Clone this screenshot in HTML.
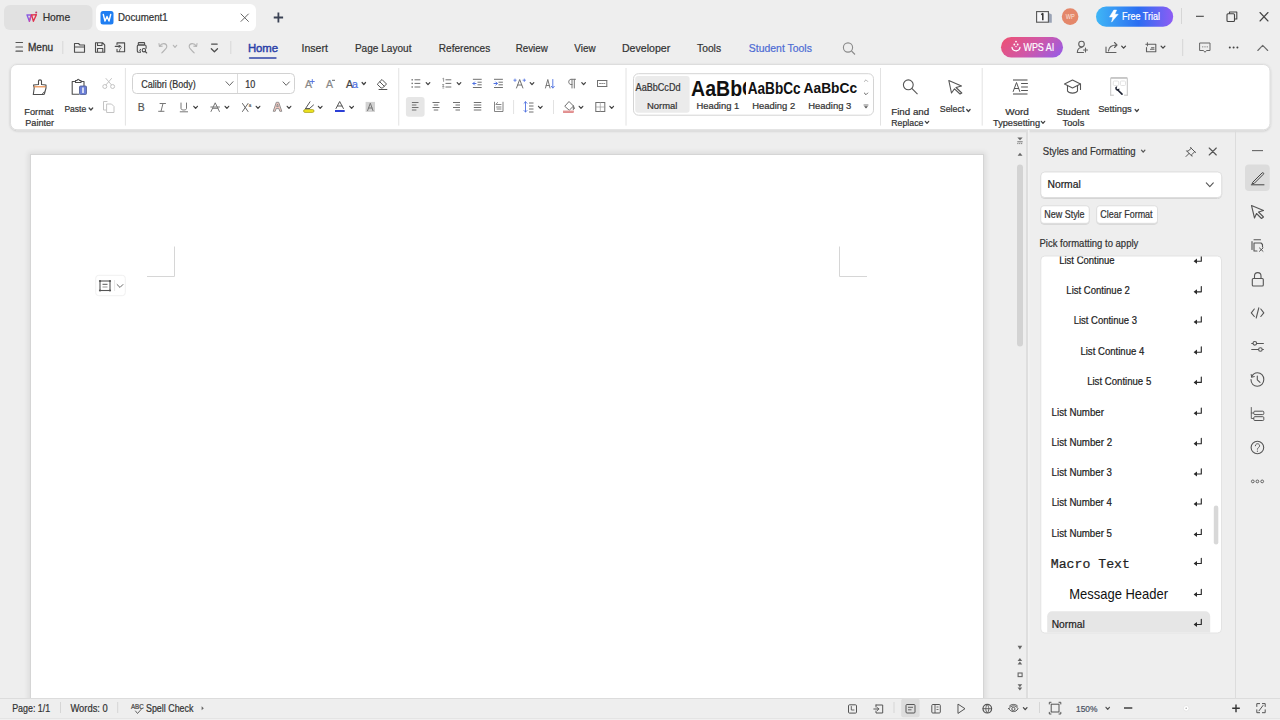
<!DOCTYPE html>
<html><head><meta charset="utf-8">
<style>
*{margin:0;padding:0}
html,body{width:1280px;height:720px;overflow:hidden;background:#eeeeee}
svg{position:absolute;left:0;top:0}
</style></head><body>
<svg width="1280" height="720" viewBox="0 0 1280 720">
<rect x="0" y="0" width="1280" height="720" rx="0" fill="#eeeeee" />
<rect x="4" y="5" width="88.5" height="25" rx="6" fill="#e1e1e1" />
<rect x="96" y="4" width="160" height="27" rx="6" fill="#ffffff" />
<defs><linearGradient id="wl" x1="0" y1="0" x2="1" y2="1"><stop offset="0" stop-color="#8b5cf6"/><stop offset="1" stop-color="#f43f5e"/></linearGradient><linearGradient id="ft" x1="0" y1="0" x2="1" y2="0"><stop offset="0" stop-color="#3fb6f6"/><stop offset="0.55" stop-color="#2b6ef2"/><stop offset="1" stop-color="#8e5cf4"/></linearGradient><linearGradient id="ai" x1="0" y1="0" x2="1" y2="1" gradientUnits="objectBoundingBox" gradientTransform="rotate(-25 .5 .5)"><stop offset="0" stop-color="#f2506a"/><stop offset="0.5" stop-color="#d058a8"/><stop offset="1" stop-color="#8c5cf2"/></linearGradient></defs>
<path d="M27,15 L31.2,15 L29.4,21.3 Z" stroke="#8a5ce0" stroke-width="1.35" fill="none" stroke-linecap="round" stroke-linejoin="round" />
<path d="M29.4,21.3 L31.2,15" stroke="#c44ab0" stroke-width="1.35" fill="none" stroke-linecap="round" stroke-linejoin="round" />
<path d="M31.6,15 L36.4,14.6 L33.4,21.3 Z" stroke="#e0344e" stroke-width="1.35" fill="none" stroke-linecap="round" stroke-linejoin="round" />
<circle cx="36.2" cy="12.6" r="1" fill="#c03a6a"/>
<text x="42.67" y="21.25" font-family="Liberation Sans" font-size="10.03" stroke="#333" stroke-width="0.22" fill="#333" textLength="27.57" lengthAdjust="spacingAndGlyphs" >Home</text>
<rect x="100.5" y="11" width="13" height="13.5" rx="2.5" fill="#1f7ef2" />
<path d="M103.3,14.5 L105,21 L107,16.5 L109,21 L110.7,14.5" stroke="#fff" stroke-width="1.4" fill="none" stroke-linecap="round" stroke-linejoin="round" />
<text x="117.97" y="21.25" font-family="Liberation Sans" font-size="10.03" stroke="#333" stroke-width="0.22" fill="#333" textLength="49.70" lengthAdjust="spacingAndGlyphs" >Document1</text>
<path d="M241,14 L248.4,21.4 M248.4,14 L241,21.4" stroke="#666" stroke-width="1" fill="none" stroke-linecap="round" stroke-linejoin="round" />
<path d="M278.4,12.4 L278.4,22.6 M273.75,17.5 L283.1,17.5" stroke="#3a4254" stroke-width="1.8" fill="none" stroke-linejoin="round" stroke-linecap="butt"/>
<path d="M1048.9,13 L1051.8,14.5 L1051.8,22.7 L1048.9,22.7 Z" fill="#9aa3b5"/>
<rect x="1036.6" y="11.6" width="11.8" height="10.6" rx="0" fill="#f8f8fa" stroke="#555" stroke-width="1.1" />
<path d="M1041.2,14.6 L1042.8,13.6 L1042.8,20.2" stroke="#333" stroke-width="1.5" fill="none" stroke-linejoin="round" stroke-linecap="butt"/>
<circle cx="1070.1" cy="16.6" r="8.3" fill="#e4876a"/>
<text x="1065.77" y="19.40" font-family="Liberation Sans" font-size="6.69" fill="#fbe6de" textLength="9.01" lengthAdjust="spacingAndGlyphs" stroke-width="0">WP</text>
<rect x="1096" y="6.6" width="77.2" height="20.2" rx="10.1" fill="url(#ft)" />
<path d="M1113.8,10.1 L1109.5,17 L1112.8,17 L1111.6,22.1 L1118.2,14.3 L1114.8,14.3 L1116.6,10.1 Z" fill="#ffffff" stroke="#ffffff" stroke-width="0.5" stroke-linejoin="round"/>
<text x="1121.98" y="20.20" font-family="Liberation Sans" font-size="11.05" stroke="#ffffff" stroke-width="0.22" fill="#ffffff" textLength="38.04" lengthAdjust="spacingAndGlyphs" >Free Trial</text>
<line x1="1181.5" y1="8" x2="1181.5" y2="24" stroke="#d6d6d6" stroke-width="1" />
<line x1="1196" y1="16.3" x2="1203.8" y2="16.3" stroke="#444" stroke-width="1.1" />
<rect x="1227" y="13.8" width="7.5" height="7.7" rx="1" fill="none" stroke="#444" stroke-width="1.1" />
<path d="M1229.5,13.5 L1229.5,12 L1236.8,12 L1236.8,19 L1234.8,19" stroke="#444" stroke-width="1.1" fill="none" stroke-linecap="round" stroke-linejoin="round" />
<path d="M1260,12.5 L1268,21 M1268,12.5 L1260,21" stroke="#444" stroke-width="1.1" fill="none" stroke-linecap="round" stroke-linejoin="round" />
<path d="M16,42.5 L22.5,42.5 M16,47 L22.5,47 M16,51.2 L22.5,51.2" stroke="#555" stroke-width="1.2" fill="none" stroke-linecap="round" stroke-linejoin="round" />
<text x="27.99" y="50.80" font-family="Liberation Sans" font-size="10.03" fill="#333" textLength="25.17" lengthAdjust="spacingAndGlyphs" stroke="#333" stroke-width="0.3">Menu</text>
<line x1="62.8" y1="41" x2="62.8" y2="54" stroke="#d8d8d8" stroke-width="1" />
<path d="M74.5,43.5 L78.5,43.5 L80,45 L84.5,45 L84.5,52.3 L74.5,52.3 Z M74.5,47 L84.5,47" stroke="#4d4d4d" stroke-width="1.1" fill="none" stroke-linecap="round" stroke-linejoin="round" />
<path d="M95.5,42.7 L102.5,42.7 L104.7,45 L104.7,52.3 L95.5,52.3 Z M97.5,42.7 L97.5,45.5 L102,45.5 L102,42.7 M97.5,52.3 L97.5,48.5 L102.8,48.5 L102.8,52.3" stroke="#4d4d4d" stroke-width="1.1" fill="none" stroke-linecap="round" stroke-linejoin="round" />
<path d="M117,44.6 L117,42.9 L124.6,42.9 L124.6,51.8 L117,51.8 L117,49.2" stroke="#4d4d4d" stroke-width="1.1" fill="none" stroke-linecap="round" stroke-linejoin="round" />
<path d="M115.3,46.3 L118.6,46.3" stroke="#4d4d4d" stroke-width="1.3" fill="none" stroke-linecap="round" stroke-linejoin="round" />
<path d="M118.6,44.6 L121.6,46.3 L118.6,48 Z" fill="#4d4d4d"/>
<path d="M121.3,47.6 C119.8,48.8 119.3,50.2 119.6,51.6" stroke="#4d4d4d" stroke-width="1" fill="none" stroke-linecap="round" stroke-linejoin="round" />
<rect x="138.3" y="42.6" width="6.3" height="2.4" rx="0.6" fill="none" stroke="#4d4d4d" stroke-width="1.1" />
<path d="M140.5,52.2 L138.6,52.2 C137.8,52.2 137.3,51.7 137.3,50.9 L137.3,46.3 C137.3,45.5 137.8,45 138.6,45 L144.8,45 C145.6,45 146.1,45.5 146.1,46.3 L146.1,48.3" stroke="#4d4d4d" stroke-width="1.1" fill="none" stroke-linecap="round" stroke-linejoin="round" />
<path d="M140.6,49.3 C139.3,49.3 139.3,51.4 140.6,51.4" stroke="#4d4d4d" stroke-width="1" fill="none" stroke-linecap="round" stroke-linejoin="round" />
<circle cx="143.9" cy="50.2" r="1.7" fill="none" stroke="#4d4d4d" stroke-width="1.1"/>
<path d="M145.2,51.5 L146.7,52.9" stroke="#4d4d4d" stroke-width="1.2" fill="none" stroke-linecap="round" stroke-linejoin="round" />
<path d="M159.6,46.2 C161.5,42.8 166.8,42.6 166.8,46.6 C166.8,48.6 164,50.6 161.8,52.9 M159,43.6 L159.4,46.5 L162.2,46.1" stroke="#b4b4b4" stroke-width="1.1" fill="none" stroke-linecap="round" stroke-linejoin="round" />
<path d="M173.34,45.30 L175.00,47.30 L176.66,45.30" fill="none" stroke="#b9b9b9" stroke-width="1.25" stroke-linecap="round" stroke-linejoin="round"/>
<path d="M196.4,46.2 C194.5,42.8 189.2,42.6 189.2,46.6 C189.2,48.6 192,50.6 194.2,52.9 M197,43.6 L196.6,46.5 L193.8,46.1" stroke="#b4b4b4" stroke-width="1.1" fill="none" stroke-linecap="round" stroke-linejoin="round" />
<path d="M211.6,44 L217.2,44 M211.3,48.7 L214.4,51.8 L217.5,48.7" stroke="#4d4d4d" stroke-width="1.25" fill="none" stroke-linecap="round" stroke-linejoin="round" />
<line x1="230.8" y1="41" x2="230.8" y2="54" stroke="#d8d8d8" stroke-width="1" />
<text x="247.89" y="52.00" font-family="Liberation Sans" font-size="11.63" fill="#2b40a8" textLength="30.25" lengthAdjust="spacingAndGlyphs" stroke="#2b40a8" stroke-width="0.45">Home</text>
<rect x="248.8" y="57.2" width="27.9" height="1.6" rx="0.8" fill="#2f44a8" />
<text x="301.55" y="52.00" font-family="Liberation Sans" font-size="11.34" stroke="#333" stroke-width="0.22" fill="#333" textLength="26.31" lengthAdjust="spacingAndGlyphs" >Insert</text>
<text x="354.89" y="52.00" font-family="Liberation Sans" font-size="11.34" stroke="#333" stroke-width="0.22" fill="#333" textLength="56.56" lengthAdjust="spacingAndGlyphs" >Page Layout</text>
<text x="438.80" y="52.00" font-family="Liberation Sans" font-size="11.34" stroke="#333" stroke-width="0.22" fill="#333" textLength="51.45" lengthAdjust="spacingAndGlyphs" >References</text>
<text x="515.72" y="52.00" font-family="Liberation Sans" font-size="11.34" stroke="#333" stroke-width="0.22" fill="#333" textLength="32.07" lengthAdjust="spacingAndGlyphs" >Review</text>
<text x="574.35" y="52.00" font-family="Liberation Sans" font-size="11.34" stroke="#333" stroke-width="0.22" fill="#333" textLength="21.24" lengthAdjust="spacingAndGlyphs" >View</text>
<text x="621.95" y="52.00" font-family="Liberation Sans" font-size="11.34" stroke="#333" stroke-width="0.22" fill="#333" textLength="48.34" lengthAdjust="spacingAndGlyphs" >Developer</text>
<text x="697.09" y="52.00" font-family="Liberation Sans" font-size="11.34" stroke="#333" stroke-width="0.22" fill="#333" textLength="23.96" lengthAdjust="spacingAndGlyphs" >Tools</text>
<text x="748.83" y="52.00" font-family="Liberation Sans" font-size="11.34" stroke="#4d6bd4" stroke-width="0.22" fill="#4d6bd4" textLength="63.05" lengthAdjust="spacingAndGlyphs" >Student Tools</text>
<circle cx="848" cy="47.5" r="4.6" fill="none" stroke="#8a8a8a" stroke-width="1.1"/>
<line x1="851.5" y1="51" x2="855" y2="54.5" stroke="#8a8a8a" stroke-width="1.1" />
<rect x="1001" y="37" width="62" height="20.5" rx="10.25" fill="url(#ai)" />
<path d="M1012,47.3 C1012.5,52 1019.5,52 1020,47.3" stroke="#fff" stroke-width="1.3" fill="none" stroke-linecap="round" stroke-linejoin="round" />
<circle cx="1014.3" cy="44.5" r="0.9" fill="#fff"/><circle cx="1017.7" cy="44.5" r="0.9" fill="#fff"/><circle cx="1016" cy="41.6" r="0.9" fill="#fff"/><circle cx="1016" cy="46.5" r="0.7" fill="#fff"/>
<text x="1023.46" y="51.30" font-family="Liberation Sans" font-size="11.63" stroke="#ffffff" stroke-width="0.22" fill="#ffffff" textLength="30.85" lengthAdjust="spacingAndGlyphs" >WPS AI</text>
<circle cx="1081.5" cy="44" r="2.8" fill="none" stroke="#606060" stroke-width="1.1"/>
<path d="M1077.3,52.5 C1077.5,48.5 1080,47.5 1082,47.5 M1077.3,52.5 L1083.5,52.5 M1085.5,48 L1085.5,52 M1083.5,50 L1087.5,50" stroke="#606060" stroke-width="1.1" fill="none" stroke-linecap="round" stroke-linejoin="round" />
<path d="M1106,47 L1106,52.5 L1116,52.5 M1108.5,51 C1109,46.5 1112,45 1116.5,45 M1114.5,42.5 L1117,45 L1114.5,47.5" stroke="#606060" stroke-width="1.1" fill="none" stroke-linecap="round" stroke-linejoin="round" />
<path d="M1121.6999999999998,46.1 L1123.6,48.1 L1125.5,46.1" stroke="#444" stroke-width="1.3" fill="none" stroke-linecap="round" stroke-linejoin="round" />
<path d="M1149.5,44.3 L1155.8,44.3 L1155.8,51.8 L1146.5,51.8 L1146.5,47.5 M1150.5,49.3 L1154,49.3 M1151.5,47.8 L1154,47.8" stroke="#606060" stroke-width="1.1" fill="none" stroke-linecap="round" stroke-linejoin="round" />
<path d="M1145.8,44.3 L1149,44.3 M1147.4,42.7 L1147.4,45.9" stroke="#606060" stroke-width="1" fill="none" stroke-linecap="round" stroke-linejoin="round" />
<path d="M1161.1,46.1 L1163,48.1 L1164.9,46.1" stroke="#444" stroke-width="1.3" fill="none" stroke-linecap="round" stroke-linejoin="round" />
<line x1="1182.7" y1="39" x2="1182.7" y2="56" stroke="#d6d6d6" stroke-width="1" />
<path d="M1200,43 L1210,43 L1210,50.5 L1206.5,50.5 L1205,52.3 L1203.5,50.5 L1200,50.5 Z" stroke="#666" stroke-width="1" fill="none" stroke-linecap="round" stroke-linejoin="round" />
<circle cx="1202.8" cy="46.8" r="0.6" fill="#666"/>
<circle cx="1205" cy="46.8" r="0.6" fill="#666"/>
<circle cx="1207.2" cy="46.8" r="0.6" fill="#666"/>
<circle cx="1229.8" cy="47.5" r="1" fill="#444"/>
<circle cx="1233.6" cy="47.5" r="1" fill="#444"/>
<circle cx="1237.4" cy="47.5" r="1" fill="#444"/>
<path d="M1257.8,50.5 L1262.7,45.3 L1267.7,50.5" stroke="#6a6a6a" stroke-width="1.1" fill="none" stroke-linecap="round" stroke-linejoin="round" />
<defs><filter id="sh" x="-2%" y="-10%" width="104%" height="130%"><feDropShadow dx="0" dy="0.8" stdDeviation="0.9" flood-color="#000" flood-opacity="0.18"/></filter></defs>
<rect x="10.5" y="64.5" width="1259.5" height="65.3" rx="6.5" fill="#ffffff" stroke="#dddddd" stroke-width="1" filter="url(#sh)"/>
<path d="M38.5,81 C38.5,79.5 41.5,79.5 41.5,81 L41.5,84.5 L46,85 L46,88 L44.5,93.5 C44.5,94.5 43.5,94.5 43,94.5 L33.3,94.5 L34.2,88 L33.5,85 L38.5,84.5 Z" stroke="#4d4d4d" stroke-width="1.1" fill="none" stroke-linecap="round" stroke-linejoin="round" />
<line x1="33.8" y1="86.8" x2="45.8" y2="86.8" stroke="#e8823a" stroke-width="1.1" />
<path d="M42,94.5 C43,93.5 43,92 44.5,92" stroke="#4d4d4d" stroke-width="1" fill="none" stroke-linecap="round" stroke-linejoin="round" />
<text x="24.36" y="114.70" font-family="Liberation Sans" font-size="9.45" stroke="#333" stroke-width="0.22" fill="#333" textLength="29.10" lengthAdjust="spacingAndGlyphs" >Format</text>
<text x="25.27" y="125.70" font-family="Liberation Sans" font-size="9.45" stroke="#333" stroke-width="0.22" fill="#333" textLength="28.80" lengthAdjust="spacingAndGlyphs" >Painter</text>
<path d="M74.5,81.5 L72.2,81.5 L72.2,94.3 L79,94.3 M81.5,81.5 L84,81.5 L84,86 M75.5,82.5 L75.5,80.5 L77,80.5 C77.5,78.8 79,78.8 79.5,80.5 L81,80.5 L81,82.5 Z" stroke="#4d4d4d" stroke-width="1.1" fill="none" stroke-linecap="round" stroke-linejoin="round" />
<rect x="79.5" y="86" width="7" height="8.5" rx="1" fill="#6b7fd7" stroke="#4d5a8f" stroke-width="0.8" />
<rect x="82.3" y="87.5" width="1.4" height="5.5" rx="0" fill="#ffffff" />
<text x="64.42" y="111.90" font-family="Liberation Sans" font-size="9.30" stroke="#333" stroke-width="0.22" fill="#333" textLength="21.78" lengthAdjust="spacingAndGlyphs" >Paste</text>
<path d="M89.09,108.00 L90.90,110.00 L92.71,108.00" fill="none" stroke="#444" stroke-width="1.25" stroke-linecap="round" stroke-linejoin="round"/>
<circle cx="104.8" cy="86.5" r="2" fill="none" stroke="#c4c4c4" stroke-width="1"/><circle cx="112.6" cy="86.5" r="2" fill="none" stroke="#c4c4c4" stroke-width="1"/>
<path d="M106,84.8 L111.5,78.5 M111.4,84.8 L106,78.5" stroke="#c4c4c4" stroke-width="1" fill="none" stroke-linecap="round" stroke-linejoin="round" />
<path d="M107,101.5 L103.5,101.5 L103.5,110 L106.5,110 M107,104 L111.5,104 L114,106.5 L114,112.5 L107,112.5 Z" stroke="#c4c4c4" stroke-width="1" fill="none" stroke-linecap="round" stroke-linejoin="round" />
<line x1="125.4" y1="68" x2="125.4" y2="125.6" stroke="#e2e2e2" stroke-width="1" />
<rect x="132.5" y="73.5" width="162" height="20" rx="4" fill="#ffffff" stroke="#d2d2d2" stroke-width="1" />
<line x1="237.5" y1="74" x2="237.5" y2="93" stroke="#dcdcdc" stroke-width="1" />
<text x="141.25" y="87.80" font-family="Liberation Sans" font-size="10.17" stroke="#333" stroke-width="0.22" fill="#333" textLength="54.41" lengthAdjust="spacingAndGlyphs" >Calibri (Body)</text>
<path d="M226.0,81.69999999999999 L229.5,85.5 L233.0,81.69999999999999" stroke="#666" stroke-width="1" fill="none" stroke-linecap="round" stroke-linejoin="round" />
<text x="245.32" y="87.50" font-family="Liberation Sans" font-size="10.03" stroke="#333" stroke-width="0.22" fill="#333" textLength="10.01" lengthAdjust="spacingAndGlyphs" >10</text>
<path d="M283.0,81.89999999999999 L286.2,85.3 L289.4,81.89999999999999" stroke="#666" stroke-width="1" fill="none" stroke-linecap="round" stroke-linejoin="round" />
<text x="305.00" y="87.50" font-family="Liberation Sans" font-size="11.05" stroke="#888888" stroke-width="0.22" fill="#888888" textLength="7.02" lengthAdjust="spacingAndGlyphs" >A</text>
<path d="M312.3,79.5 L312.3,83.5 M310.3,81.5 L314.3,81.5" stroke="#4d6fe0" stroke-width="0.9" fill="none" stroke-linecap="round" stroke-linejoin="round" />
<text x="326.00" y="87.50" font-family="Liberation Sans" font-size="11.05" stroke="#888888" stroke-width="0.22" fill="#888888" textLength="7.02" lengthAdjust="spacingAndGlyphs" >A</text>
<line x1="332" y1="80.3" x2="335" y2="80.3" stroke="#555" stroke-width="0.9" />
<text x="346.00" y="87.50" font-family="Liberation Sans" font-size="11.05" stroke="#444" stroke-width="0.22" fill="#444" textLength="7.02" lengthAdjust="spacingAndGlyphs" >A</text>
<text x="352.07" y="87.50" font-family="Liberation Sans" font-size="10.42" stroke="#4d6fe0" stroke-width="0.22" fill="#4d6fe0" textLength="5.94" lengthAdjust="spacingAndGlyphs" >a</text>
<path d="M362.09,82.50 L363.80,84.50 L365.51,82.50" fill="none" stroke="#444" stroke-width="1.25" stroke-linecap="round" stroke-linejoin="round"/>
<path d="M377.5,84 L382,79.5 L386.5,84 L382.5,88 L381.5,88 Z M379.8,81.8 L384.2,86.2 M379,89.5 L386.9,89.5" stroke="#555" stroke-width="1" fill="none" stroke-linecap="round" stroke-linejoin="round" />
<text x="137.76" y="111.20" font-family="Liberation Sans" font-size="11.48" stroke="#555" stroke-width="0.22" fill="#555" textLength="6.98" lengthAdjust="spacingAndGlyphs" >B</text>
<path d="M160,103.5 L165.5,103.5 M158.6,111.3 L164,111.3 M163,103.5 L161,111.3" stroke="#777" stroke-width="1" fill="none" stroke-linecap="round" stroke-linejoin="round" />
<path d="M181,103 L181,108.5 C181,110.5 186.5,110.5 186.5,108.5 L186.5,103 M180.2,111.8 L187.6,111.8" stroke="#777" stroke-width="1" fill="none" stroke-linecap="round" stroke-linejoin="round" />
<path d="M193.79,106.30 L195.60,108.30 L197.41,106.30" fill="none" stroke="#444" stroke-width="1.25" stroke-linecap="round" stroke-linejoin="round"/>
<path d="M211,111.5 L215.2,102.8 L219.4,111.5 M212.5,108.3 L218,108.3 M210.8,107 L219.5,107" stroke="#777" stroke-width="1" fill="none" stroke-linecap="round" stroke-linejoin="round" />
<path d="M225.09,106.30 L226.90,108.30 L228.71,106.30" fill="none" stroke="#444" stroke-width="1.25" stroke-linecap="round" stroke-linejoin="round"/>
<path d="M242.5,103.5 L248,111.5 M248,103.5 L242.5,111.5" stroke="#666" stroke-width="1" fill="none" stroke-linecap="round" stroke-linejoin="round" />
<text x="248.82" y="106.50" font-family="Liberation Sans" font-size="5.00" stroke="#666" stroke-width="0.22" fill="#666" textLength="2.48" lengthAdjust="spacingAndGlyphs" >a</text>
<path d="M256.19,106.30 L258.00,108.30 L259.81,106.30" fill="none" stroke="#444" stroke-width="1.25" stroke-linecap="round" stroke-linejoin="round"/>
<path d="M273.2,111.3 L276.3,102.3 L278.7,102.3 L281.8,111.3 L279.8,111.3 L278.9,108.6 L276.1,108.6 L275.2,111.3 Z M276.7,106.6 L278.3,106.6 L277.5,104 Z" fill="#f2c8c0" stroke="#8a8a8a" stroke-width="0.9" stroke-linejoin="round"/>
<path d="M287.19,106.30 L289.00,108.30 L290.81,106.30" fill="none" stroke="#444" stroke-width="1.25" stroke-linecap="round" stroke-linejoin="round"/>
<rect x="303.6" y="109.6" width="10.4" height="2.8" rx="1.4" fill="#f0e61e" stroke="#a8a020" stroke-width="0.8" />
<path d="M305.5,108.6 L310,101.8 M309.5,108.5 L313.5,105 M305.5,108.6 L309.5,108.5" stroke="#555" stroke-width="1" fill="none" stroke-linecap="round" stroke-linejoin="round" />
<path d="M318.39,106.30 L320.20,108.30 L322.00,106.30" fill="none" stroke="#444" stroke-width="1.25" stroke-linecap="round" stroke-linejoin="round"/>
<path d="M336,108.5 L339.7,101.5 L343.4,108.5 M337.5,106 L342,106" stroke="#555" stroke-width="1" fill="none" stroke-linecap="round" stroke-linejoin="round" />
<rect x="335" y="110" width="9.7" height="2" rx="0" fill="#2b3fd6" />
<path d="M349.80,106.30 L351.60,108.30 L353.41,106.30" fill="none" stroke="#444" stroke-width="1.25" stroke-linecap="round" stroke-linejoin="round"/>
<rect x="365.6" y="101.9" width="9.4" height="10" rx="0" fill="#d2d2d2" />
<path d="M367.6,110.6 L370.3,103.2 L373,110.6 M368.6,108 L372,108" stroke="#777" stroke-width="1" fill="none" stroke-linecap="round" stroke-linejoin="round" />
<line x1="398.75" y1="68" x2="398.75" y2="125.6" stroke="#e2e2e2" stroke-width="1" />
<rect x="411.5" y="79.1" width="1.4" height="1.4" rx="0" fill="#707070" />
<line x1="414.5" y1="79.8" x2="420.3" y2="79.8" stroke="#707070" stroke-width="1" />
<rect x="411.5" y="82.7" width="1.4" height="1.4" rx="0" fill="#707070" />
<line x1="414.5" y1="83.4" x2="420.3" y2="83.4" stroke="#707070" stroke-width="1" />
<rect x="411.5" y="86.3" width="1.4" height="1.4" rx="0" fill="#707070" />
<line x1="414.5" y1="87" x2="420.3" y2="87" stroke="#707070" stroke-width="1" />
<path d="M426.19,82.60 L428.00,84.60 L429.81,82.60" fill="none" stroke="#444" stroke-width="1.25" stroke-linecap="round" stroke-linejoin="round"/>
<line x1="445.5" y1="79.8" x2="451.3" y2="79.8" stroke="#707070" stroke-width="1" />
<line x1="445.5" y1="83.4" x2="451.3" y2="83.4" stroke="#707070" stroke-width="1" />
<line x1="445.5" y1="87" x2="451.3" y2="87" stroke="#707070" stroke-width="1" />
<path d="M442.8,78.6 L443.6,78.2 L443.6,81.4 M442.6,84.5 L443.8,84.5 L442.6,86.5 L443.9,86.5 M442.8,88 L443.8,88" stroke="#707070" stroke-width="0.7" fill="none" stroke-linecap="round" stroke-linejoin="round" />
<path d="M457.19,82.60 L459.00,84.60 L460.81,82.60" fill="none" stroke="#444" stroke-width="1.25" stroke-linecap="round" stroke-linejoin="round"/>
<line x1="472.9" y1="79.3" x2="481.7" y2="79.3" stroke="#707070" stroke-width="1" />
<line x1="472.9" y1="87.5" x2="481.7" y2="87.5" stroke="#707070" stroke-width="1" />
<line x1="477.5" y1="82.2" x2="481.7" y2="82.2" stroke="#707070" stroke-width="1" />
<line x1="477.5" y1="84.8" x2="481.7" y2="84.8" stroke="#707070" stroke-width="1" />
<path d="M476,83.5 L473,83.5 M474.5,82 L473,83.5 L474.5,85" stroke="#4d6fe0" stroke-width="1" fill="none" stroke-linecap="round" stroke-linejoin="round" />
<line x1="494" y1="79.3" x2="502.9" y2="79.3" stroke="#707070" stroke-width="1" />
<line x1="494" y1="87.5" x2="502.9" y2="87.5" stroke="#707070" stroke-width="1" />
<line x1="498.5" y1="82.2" x2="502.9" y2="82.2" stroke="#707070" stroke-width="1" />
<line x1="498.5" y1="84.8" x2="502.9" y2="84.8" stroke="#707070" stroke-width="1" />
<path d="M494,83.5 L497.3,83.5 M495.8,82 L497.3,83.5 L495.8,85" stroke="#4d6fe0" stroke-width="1" fill="none" stroke-linecap="round" stroke-linejoin="round" />
<path d="M516.5,88 L519.7,79.5 L522.9,88 M517.7,85 L521.7,85" stroke="#707070" stroke-width="1" fill="none" stroke-linecap="round" stroke-linejoin="round" />
<path d="M515,79 L515,81.5 M513.8,80.2 L516.2,80.2 M524.3,79 L524.3,81.5 M523,80.2 L525.5,80.2" stroke="#4d6fe0" stroke-width="0.8" fill="none" stroke-linecap="round" stroke-linejoin="round" />
<path d="M530.20,82.60 L532.00,84.60 L533.80,82.60" fill="none" stroke="#444" stroke-width="1.25" stroke-linecap="round" stroke-linejoin="round"/>
<path d="M545.5,88 L547.8,79.5 L550,88 M546.2,85.5 L549.3,85.5" stroke="#777" stroke-width="1" fill="none" stroke-linecap="round" stroke-linejoin="round" />
<path d="M552.8,79.5 L552.8,88 M551.3,86.3 L552.8,88 L554.3,86.3" stroke="#4d6fe0" stroke-width="0.9" fill="none" stroke-linecap="round" stroke-linejoin="round" />
<path d="M572,79.3 L572,88 M574.3,79.3 L574.3,88 M575.5,79.3 L571,79.3 C568,79.3 568,84.5 571,84.5 L572,84.5" stroke="#777" stroke-width="1" fill="none" stroke-linecap="round" stroke-linejoin="round" />
<path d="M581.80,82.60 L583.60,84.60 L585.40,82.60" fill="none" stroke="#444" stroke-width="1.25" stroke-linecap="round" stroke-linejoin="round"/>
<path d="M597.5,80.5 L606.8,80.5 M597.5,86.5 L606.8,86.5 M597.5,80.5 L597.5,86.5 M606.8,80.5 L606.8,86.5" stroke="#707070" stroke-width="1" fill="none" stroke-linecap="round" stroke-linejoin="round" />
<path d="M599.5,83.5 L604.8,83.5" stroke="#707070" stroke-width="0.8" fill="none" stroke-linecap="round" stroke-linejoin="round" stroke-dasharray="1.2 1"/>
<rect x="405.9" y="97" width="18.7" height="19.8" rx="3" fill="#e6e6e6" />
<line x1="411.9" y1="102.5" x2="418.5" y2="102.5" stroke="#707070" stroke-width="1" />
<line x1="411.9" y1="105" x2="416.4" y2="105" stroke="#707070" stroke-width="1" />
<line x1="411.9" y1="107.5" x2="418.5" y2="107.5" stroke="#707070" stroke-width="1" />
<line x1="411.9" y1="110" x2="416.4" y2="110" stroke="#707070" stroke-width="1" />
<line x1="432.5" y1="102.5" x2="439.5" y2="102.5" stroke="#707070" stroke-width="1" />
<line x1="433.75" y1="105" x2="438.25" y2="105" stroke="#707070" stroke-width="1" />
<line x1="432.5" y1="107.5" x2="439.5" y2="107.5" stroke="#707070" stroke-width="1" />
<line x1="433.75" y1="110" x2="438.25" y2="110" stroke="#707070" stroke-width="1" />
<line x1="453" y1="102.5" x2="460" y2="102.5" stroke="#707070" stroke-width="1" />
<line x1="455.5" y1="105" x2="460" y2="105" stroke="#707070" stroke-width="1" />
<line x1="453" y1="107.5" x2="460" y2="107.5" stroke="#707070" stroke-width="1" />
<line x1="455.5" y1="110" x2="460" y2="110" stroke="#707070" stroke-width="1" />
<line x1="473.8" y1="102.5" x2="481.3" y2="102.5" stroke="#707070" stroke-width="1" />
<line x1="473.8" y1="105" x2="481.3" y2="105" stroke="#707070" stroke-width="1" />
<line x1="473.8" y1="107.5" x2="481.3" y2="107.5" stroke="#707070" stroke-width="1" />
<line x1="473.8" y1="110" x2="481.3" y2="110" stroke="#707070" stroke-width="1" />
<path d="M494.5,102.2 L494.5,111.5 L503,111.5 L503,102.2 M496.5,104.5 L501,104.5 M496.5,107 L501,107 M497.5,102.5 L496,104.3 M497,109 L501,109" stroke="#777" stroke-width="0.9" fill="none" stroke-linecap="round" stroke-linejoin="round" />
<line x1="513.6" y1="100" x2="513.6" y2="114" stroke="#e2e2e2" stroke-width="1" />
<path d="M525.5,101.8 L525.5,112 M524,103.3 L525.5,101.8 L527,103.3 M524,110.5 L525.5,112 L527,110.5" stroke="#4d6fe0" stroke-width="0.9" fill="none" stroke-linecap="round" stroke-linejoin="round" />
<line x1="529" y1="103" x2="533.5" y2="103" stroke="#707070" stroke-width="1" />
<line x1="529" y1="106" x2="533.5" y2="106" stroke="#707070" stroke-width="1" />
<line x1="529" y1="109" x2="533.5" y2="109" stroke="#707070" stroke-width="1" />
<line x1="529" y1="112" x2="533.5" y2="112" stroke="#707070" stroke-width="1" />
<path d="M538.50,106.30 L540.30,108.30 L542.10,106.30" fill="none" stroke="#444" stroke-width="1.25" stroke-linecap="round" stroke-linejoin="round"/>
<line x1="553.5" y1="100" x2="553.5" y2="114" stroke="#e2e2e2" stroke-width="1" />
<path d="M565,106 L569,101.5 L573.5,106 L569.5,110 Z" stroke="#707070" stroke-width="1" fill="none" stroke-linecap="round" stroke-linejoin="round" />
<path d="M573.5,106 L574.5,108.5 L573.5,109.5 Z" stroke="#707070" stroke-width="0.8" fill="#555" stroke-linecap="round" stroke-linejoin="round" />
<rect x="563" y="110.5" width="11" height="2" rx="0" fill="#e7a0a0" />
<path d="M563.5,112.3 L573,112.3" stroke="#c44" stroke-width="0.6" fill="none" stroke-linecap="round" stroke-linejoin="round" />
<path d="M579.20,106.30 L581.00,108.30 L582.80,106.30" fill="none" stroke="#444" stroke-width="1.25" stroke-linecap="round" stroke-linejoin="round"/>
<rect x="595.8" y="102.5" width="9" height="9" rx="0" fill="none" stroke="#707070" stroke-width="1" />
<path d="M600.3,102.5 L600.3,111.5 M595.8,107 L604.8,107" stroke="#999" stroke-width="0.7" fill="none" stroke-linecap="round" stroke-linejoin="round" />
<path d="M609.90,106.30 L611.70,108.30 L613.50,106.30" fill="none" stroke="#444" stroke-width="1.25" stroke-linecap="round" stroke-linejoin="round"/>
<line x1="626" y1="68" x2="626" y2="125.6" stroke="#e2e2e2" stroke-width="1" />
<rect x="633.5" y="73.7" width="240" height="41.5" rx="5" fill="#ffffff" stroke="#d4d4d4" stroke-width="1" />
<rect x="635.2" y="76.1" width="54.4" height="36.6" rx="3" fill="#ebebeb" />
<text x="635.60" y="91.10" font-family="Liberation Sans" font-size="10.17" stroke="#333" stroke-width="0.22" fill="#333" textLength="44.91" lengthAdjust="spacingAndGlyphs" >AaBbCcDd</text>
<text x="647.05" y="108.70" font-family="Liberation Sans" font-size="9.59" stroke="#333" stroke-width="0.22" fill="#333" textLength="30.39" lengthAdjust="spacingAndGlyphs" >Normal</text>
<clipPath id="h1c"><rect x="690" y="70" width="56" height="40"/></clipPath>
<text x="691.11" y="95.75" font-family="Liberation Sans" font-size="21.80" font-weight="bold" fill="#111" textLength="65.03" lengthAdjust="spacingAndGlyphs" clip-path="url(#h1c)">AaBbC</text>
<text x="696.45" y="108.70" font-family="Liberation Sans" font-size="9.59" stroke="#333" stroke-width="0.22" fill="#333" textLength="42.77" lengthAdjust="spacingAndGlyphs" >Heading 1</text>
<text x="747.66" y="94.00" font-family="Liberation Sans" font-size="16.57" font-weight="bold" fill="#111" textLength="52.95" lengthAdjust="spacingAndGlyphs" >AaBbCc</text>
<text x="752.25" y="108.70" font-family="Liberation Sans" font-size="9.59" stroke="#333" stroke-width="0.22" fill="#333" textLength="42.92" lengthAdjust="spacingAndGlyphs" >Heading 2</text>
<text x="803.56" y="93.40" font-family="Liberation Sans" font-size="14.83" font-weight="bold" fill="#111" textLength="53.55" lengthAdjust="spacingAndGlyphs" >AaBbCc</text>
<text x="808.24" y="108.70" font-family="Liberation Sans" font-size="9.59" stroke="#333" stroke-width="0.22" fill="#333" textLength="43.13" lengthAdjust="spacingAndGlyphs" >Heading 3</text>
<path d="M864.3,81.5 L866,79.8 L867.7,81.5" stroke="#aaa" stroke-width="0.9" fill="none" stroke-linecap="round" stroke-linejoin="round" />
<path d="M864.3,93 L866,94.7 L867.7,93" stroke="#555" stroke-width="0.9" fill="none" stroke-linecap="round" stroke-linejoin="round" />
<path d="M864,105 L868,105" stroke="#555" stroke-width="0.8" fill="none" stroke-linecap="round" stroke-linejoin="round" />
<path d="M864,106.3 L868,106.3 L866,108.5 Z" fill="#555"/>
<line x1="880.5" y1="68" x2="880.5" y2="125.6" stroke="#e2e2e2" stroke-width="1" />
<circle cx="908.3" cy="84.8" r="4.9" fill="none" stroke="#555" stroke-width="1.1"/>
<line x1="911.8" y1="88.3" x2="917.5" y2="94.2" stroke="#555" stroke-width="1.1" />
<text x="891.22" y="114.60" font-family="Liberation Sans" font-size="9.30" stroke="#333" stroke-width="0.22" fill="#333" textLength="38.03" lengthAdjust="spacingAndGlyphs" >Find and</text>
<text x="891.30" y="125.60" font-family="Liberation Sans" font-size="9.59" stroke="#333" stroke-width="0.22" fill="#333" textLength="32.08" lengthAdjust="spacingAndGlyphs" >Replace</text>
<path d="M925.29,121.30 L927.00,123.30 L928.71,121.30" fill="none" stroke="#444" stroke-width="1.25" stroke-linecap="round" stroke-linejoin="round"/>
<path d="M948.8,80.5 L961.5,86 L956,87.5 L961.8,93 L960,94 L954.5,88.8 L951.5,93 Z" stroke="#555" stroke-width="1.1" fill="none" stroke-linecap="round" stroke-linejoin="round" />
<text x="939.80" y="112.20" font-family="Liberation Sans" font-size="9.59" stroke="#333" stroke-width="0.22" fill="#333" textLength="24.58" lengthAdjust="spacingAndGlyphs" >Select</text>
<path d="M966.69,109.50 L968.40,111.50 L970.11,109.50" fill="none" stroke="#444" stroke-width="1.25" stroke-linecap="round" stroke-linejoin="round"/>
<line x1="982.2" y1="68" x2="982.2" y2="125.6" stroke="#e2e2e2" stroke-width="1" />
<line x1="1013" y1="80" x2="1027.5" y2="80" stroke="#555" stroke-width="1.1" />
<line x1="1013" y1="94" x2="1027.5" y2="94" stroke="#555" stroke-width="1.1" />
<path d="M1013.2,91.5 L1016.5,82.5 L1019.8,91.5 M1014.4,88.5 L1018.6,88.5 M1021.5,83.5 L1027.5,83.5 M1021.5,87 L1027.5,87 M1021.5,90.5 L1027.5,90.5" stroke="#555" stroke-width="1" fill="none" stroke-linecap="round" stroke-linejoin="round" />
<text x="1005.15" y="114.60" font-family="Liberation Sans" font-size="9.30" stroke="#333" stroke-width="0.22" fill="#333" textLength="23.71" lengthAdjust="spacingAndGlyphs" >Word</text>
<text x="993.02" y="125.60" font-family="Liberation Sans" font-size="9.59" stroke="#333" stroke-width="0.22" fill="#333" textLength="47.08" lengthAdjust="spacingAndGlyphs" >Typesetting</text>
<path d="M1041.29,121.30 L1043.00,123.30 L1044.71,121.30" fill="none" stroke="#444" stroke-width="1.25" stroke-linecap="round" stroke-linejoin="round"/>
<path d="M1064.5,84 L1072.5,80 L1080.5,84 L1072.5,88 Z" stroke="#555" stroke-width="1.1" fill="none" stroke-linecap="round" stroke-linejoin="round" />
<path d="M1067.5,85.8 L1067.5,91 C1069,93.8 1076,93.8 1077.5,91 L1077.5,85.8 M1080.5,84 L1080.5,89.5" stroke="#555" stroke-width="1.1" fill="none" stroke-linecap="round" stroke-linejoin="round" />
<text x="1056.57" y="114.60" font-family="Liberation Sans" font-size="9.30" stroke="#333" stroke-width="0.22" fill="#333" textLength="32.90" lengthAdjust="spacingAndGlyphs" >Student</text>
<text x="1062.51" y="125.60" font-family="Liberation Sans" font-size="9.59" stroke="#333" stroke-width="0.22" fill="#333" textLength="21.81" lengthAdjust="spacingAndGlyphs" >Tools</text>
<path d="M1110.7,95.2 L1110.7,78.2 L1127.3,78.2 L1127.3,95.2" stroke="#c4c4c4" stroke-width="1" fill="none" stroke-linecap="round" stroke-linejoin="round" />
<line x1="1110.7" y1="77.8" x2="1127.3" y2="77.8" stroke="#bdbdbd" stroke-width="1.2" />
<path d="M1110.7,95.2 L1113.5,95.2 M1124.5,95.2 L1127.3,95.2" stroke="#c4c4c4" stroke-width="1" fill="none" stroke-linecap="round" stroke-linejoin="round" />
<rect x="1113.3" y="81" width="5.4" height="4.5" rx="1" fill="none" stroke="#dcdcdc" stroke-width="0.8" />
<rect x="1120.4" y="81" width="5.1" height="4.5" rx="1" fill="none" stroke="#dcdcdc" stroke-width="0.8" />
<path d="M1117.8,90 L1122,94.2" stroke="#1f2433" stroke-width="1.7" fill="none" stroke-linecap="round" stroke-linejoin="round" />
<path d="M1115.2,88 C1115.2,86.6 1116.6,86.2 1117.3,86.6 L1116.6,88.3 L1117.6,89.3 L1119.3,88.6 C1119.7,89.3 1119.3,90.7 1117.9,90.7 C1116.4,90.9 1115.2,89.6 1115.2,88 Z" fill="#1f2433"/>
<text x="1098.18" y="112.20" font-family="Liberation Sans" font-size="9.59" stroke="#333" stroke-width="0.22" fill="#333" textLength="33.53" lengthAdjust="spacingAndGlyphs" >Settings</text>
<path d="M1135.09,109.50 L1136.80,111.50 L1138.51,109.50" fill="none" stroke="#444" stroke-width="1.25" stroke-linecap="round" stroke-linejoin="round"/>
<defs><filter id="psh" x="-3%" y="-3%" width="106%" height="106%"><feGaussianBlur stdDeviation="2.5"/></filter></defs>
<rect x="28" y="152" width="958" height="560" rx="0" fill="#000000" opacity="0.07" filter="url(#psh)"/>
<rect x="30.5" y="154.5" width="953" height="560" rx="0" fill="#ffffff" stroke="#d5d5d5" stroke-width="1" />
<path d="M174.5,246.5 L174.5,276.5 L147,276.5" stroke="#d6d6d6" stroke-width="1" fill="none" stroke-linecap="butt" stroke-linejoin="miter"/>
<path d="M839.5,246.5 L839.5,276.5 L867,276.5" stroke="#d6d6d6" stroke-width="1" fill="none" stroke-linecap="butt" stroke-linejoin="miter"/>
<rect x="95.7" y="275.3" width="29.6" height="20.4" rx="3" fill="#ffffff" stroke="#f0f0f0" stroke-width="1" />
<rect x="100" y="281" width="10" height="9.5" rx="0" fill="none" stroke="#555" stroke-width="1.1" />
<circle cx="100" cy="281" r="1.1" fill="#555"/>
<circle cx="110" cy="281" r="1.1" fill="#555"/>
<circle cx="100" cy="290.5" r="1.1" fill="#555"/>
<circle cx="110" cy="290.5" r="1.1" fill="#555"/>
<line x1="102.5" y1="284.3" x2="107.5" y2="284.3" stroke="#555" stroke-width="1" />
<line x1="102.5" y1="287" x2="107.5" y2="287" stroke="#999" stroke-width="1" />
<line x1="114.6" y1="280" x2="114.6" y2="291" stroke="#e6e6e6" stroke-width="1" />
<path d="M117.1,284.55 L120,287.45 L122.9,284.55" stroke="#666" stroke-width="1" fill="none" stroke-linecap="round" stroke-linejoin="round" />
<rect x="1017" y="164.4" width="6" height="182" rx="3" fill="#d3d3d3" />
<path d="M1017.3,137.5 L1022.7,137.5 L1020,140.3 Z" fill="#666"/>
<line x1="1017.3" y1="141.8" x2="1022.7" y2="141.8" stroke="#666" stroke-width="0.9" />
<line x1="1017.3" y1="143.6" x2="1022.7" y2="143.6" stroke="#666" stroke-width="0.9" stroke-dasharray="1.1 0.8"/>
<path d="M1017.6,155.8 L1022.5,155.8 L1020,152.7 Z" fill="#666"/>
<path d="M1017.6,645.7 L1022.2,645.7 L1019.9,649.5 Z" fill="#666"/>
<path d="M1017.6,661 L1022.2,661 L1019.9,658 Z M1017.6,664.4 L1022.2,664.4 L1019.9,661.4 Z" fill="#666"/>
<rect x="1018.1" y="673" width="4" height="3.6" rx="0" fill="none" stroke="#666" stroke-width="1.1" />
<path d="M1017.6,684.2 L1022.2,684.2 L1019.9,687.2 Z M1017.6,687.6 L1022.2,687.6 L1019.9,690.6 Z" fill="#666"/>
<rect x="1026" y="130" width="2" height="568" rx="0" fill="#dedede" />
<rect x="1028" y="130" width="1.5" height="568" rx="0" fill="#f2f2f2" />
<line x1="1235.5" y1="130" x2="1235.5" y2="698" stroke="#dcdcdc" stroke-width="1" />
<text x="1042.87" y="154.70" font-family="Liberation Sans" font-size="11.19" stroke="#333" stroke-width="0.22" fill="#333" textLength="92.77" lengthAdjust="spacingAndGlyphs" >Styles and Formatting</text>
<path d="M1141.49,150.20 L1143.20,152.20 L1144.91,150.20" fill="none" stroke="#555" stroke-width="1.25" stroke-linecap="round" stroke-linejoin="round"/>
<path d="M1190.5,147.5 L1195.5,152.5 M1191.3,148.3 L1188,151.2 L1186.5,150.8 L1192,156.3 L1191.6,154.8 L1194.7,151.7 M1189.3,153.2 L1186,156.5" stroke="#555" stroke-width="1" fill="none" stroke-linecap="round" stroke-linejoin="round" />
<path d="M1209.2,148 L1216.3,155 M1216.3,148 L1209.2,155" stroke="#555" stroke-width="1.1" fill="none" stroke-linecap="round" stroke-linejoin="round" />
<defs><filter id="sh2" x="-5%" y="-20%" width="110%" height="150%"><feDropShadow dx="0" dy="0.6" stdDeviation="0.6" flood-color="#000" flood-opacity="0.2"/></filter></defs>
<rect x="1040.8" y="172" width="180.9" height="25.5" rx="4" fill="#ffffff" stroke="#dadada" stroke-width="0.8" filter="url(#sh2)"/>
<text x="1047.48" y="188.00" font-family="Liberation Sans" font-size="10.47" stroke="#222" stroke-width="0.22" fill="#222" textLength="33.22" lengthAdjust="spacingAndGlyphs" >Normal</text>
<path d="M1206.3,182.95000000000002 L1209.8,186.65 L1213.3,182.95000000000002" stroke="#555" stroke-width="1.1" fill="none" stroke-linecap="round" stroke-linejoin="round" />
<rect x="1040.8" y="205.8" width="48.4" height="17.5" rx="3" fill="#ffffff" stroke="#dadada" stroke-width="0.8" filter="url(#sh2)"/>
<text x="1044.28" y="218.30" font-family="Liberation Sans" font-size="10.17" stroke="#333" stroke-width="0.22" fill="#333" textLength="40.33" lengthAdjust="spacingAndGlyphs" >New Style</text>
<rect x="1096.7" y="205.8" width="60.8" height="17.5" rx="3" fill="#ffffff" stroke="#dadada" stroke-width="0.8" filter="url(#sh2)"/>
<text x="1100.35" y="218.30" font-family="Liberation Sans" font-size="10.17" stroke="#333" stroke-width="0.22" fill="#333" textLength="52.23" lengthAdjust="spacingAndGlyphs" >Clear Format</text>
<text x="1039.54" y="247.00" font-family="Liberation Sans" font-size="10.61" stroke="#333" stroke-width="0.22" fill="#333" textLength="98.75" lengthAdjust="spacingAndGlyphs" >Pick formatting to apply</text>
<rect x="1040.8" y="256" width="180.7" height="377" rx="4" fill="#ffffff" stroke="#e3e3e3" stroke-width="1" />
<clipPath id="lb"><rect x="1041" y="256.5" width="180" height="376" rx="3.5"/></clipPath>
<g clip-path="url(#lb)">
<rect x="1047.2" y="611.3" width="163" height="30" rx="5" fill="#e6e6e6" />
<text x="1059.24" y="263.60" font-family="Liberation Sans" font-size="10.47" stroke="#222" stroke-width="0.22" fill="#222" textLength="55.41" lengthAdjust="spacingAndGlyphs" >List Continue</text>
<path d="M1201.3,255.89999999999998 L1201.3,261.2 L1196,261.2" stroke="#2a2a2a" stroke-width="1.15" fill="none" stroke-linecap="round" stroke-linejoin="round" />
<path d="M1193.6,261.2 L1197,258.59999999999997 L1197,263.8 Z" fill="#2a2a2a"/>
<text x="1066.34" y="294.20" font-family="Liberation Sans" font-size="10.47" stroke="#222" stroke-width="0.22" fill="#222" textLength="63.55" lengthAdjust="spacingAndGlyphs" >List Continue 2</text>
<path d="M1201.3,286.5 L1201.3,291.8 L1196,291.8" stroke="#2a2a2a" stroke-width="1.15" fill="none" stroke-linecap="round" stroke-linejoin="round" />
<path d="M1193.6,291.8 L1197,289.2 L1197,294.40000000000003 Z" fill="#2a2a2a"/>
<text x="1073.64" y="324.40" font-family="Liberation Sans" font-size="10.47" stroke="#222" stroke-width="0.22" fill="#222" textLength="63.35" lengthAdjust="spacingAndGlyphs" >List Continue 3</text>
<path d="M1201.3,316.7 L1201.3,322 L1196,322" stroke="#2a2a2a" stroke-width="1.15" fill="none" stroke-linecap="round" stroke-linejoin="round" />
<path d="M1193.6,322 L1197,319.4 L1197,324.6 Z" fill="#2a2a2a"/>
<text x="1080.43" y="354.60" font-family="Liberation Sans" font-size="10.47" stroke="#222" stroke-width="0.22" fill="#222" textLength="63.86" lengthAdjust="spacingAndGlyphs" >List Continue 4</text>
<path d="M1201.3,346.9 L1201.3,352.2 L1196,352.2" stroke="#2a2a2a" stroke-width="1.15" fill="none" stroke-linecap="round" stroke-linejoin="round" />
<path d="M1193.6,352.2 L1197,349.59999999999997 L1197,354.8 Z" fill="#2a2a2a"/>
<text x="1087.13" y="384.80" font-family="Liberation Sans" font-size="10.47" stroke="#222" stroke-width="0.22" fill="#222" textLength="64.11" lengthAdjust="spacingAndGlyphs" >List Continue 5</text>
<path d="M1201.3,377.09999999999997 L1201.3,382.4 L1196,382.4" stroke="#2a2a2a" stroke-width="1.15" fill="none" stroke-linecap="round" stroke-linejoin="round" />
<path d="M1193.6,382.4 L1197,379.79999999999995 L1197,385.0 Z" fill="#2a2a2a"/>
<text x="1051.62" y="415.65" font-family="Liberation Sans" font-size="10.47" stroke="#222" stroke-width="0.22" fill="#222" textLength="52.33" lengthAdjust="spacingAndGlyphs" >List Number</text>
<path d="M1201.3,407.95 L1201.3,413.25 L1196,413.25" stroke="#2a2a2a" stroke-width="1.15" fill="none" stroke-linecap="round" stroke-linejoin="round" />
<path d="M1193.6,413.25 L1197,410.65 L1197,415.85 Z" fill="#2a2a2a"/>
<text x="1051.62" y="446.10" font-family="Liberation Sans" font-size="10.47" stroke="#222" stroke-width="0.22" fill="#222" textLength="60.46" lengthAdjust="spacingAndGlyphs" >List Number 2</text>
<path d="M1201.3,438.4 L1201.3,443.7 L1196,443.7" stroke="#2a2a2a" stroke-width="1.15" fill="none" stroke-linecap="round" stroke-linejoin="round" />
<path d="M1193.6,443.7 L1197,441.09999999999997 L1197,446.3 Z" fill="#2a2a2a"/>
<text x="1051.62" y="476.40" font-family="Liberation Sans" font-size="10.47" stroke="#222" stroke-width="0.22" fill="#222" textLength="60.36" lengthAdjust="spacingAndGlyphs" >List Number 3</text>
<path d="M1201.3,468.7 L1201.3,474 L1196,474" stroke="#2a2a2a" stroke-width="1.15" fill="none" stroke-linecap="round" stroke-linejoin="round" />
<path d="M1193.6,474 L1197,471.4 L1197,476.6 Z" fill="#2a2a2a"/>
<text x="1051.63" y="506.40" font-family="Liberation Sans" font-size="10.47" stroke="#222" stroke-width="0.22" fill="#222" textLength="60.26" lengthAdjust="spacingAndGlyphs" >List Number 4</text>
<path d="M1201.3,498.7 L1201.3,504 L1196,504" stroke="#2a2a2a" stroke-width="1.15" fill="none" stroke-linecap="round" stroke-linejoin="round" />
<path d="M1193.6,504 L1197,501.4 L1197,506.6 Z" fill="#2a2a2a"/>
<text x="1051.62" y="536.90" font-family="Liberation Sans" font-size="10.47" stroke="#222" stroke-width="0.22" fill="#222" textLength="60.36" lengthAdjust="spacingAndGlyphs" >List Number 5</text>
<path d="M1201.3,529.2 L1201.3,534.5 L1196,534.5" stroke="#2a2a2a" stroke-width="1.15" fill="none" stroke-linecap="round" stroke-linejoin="round" />
<path d="M1193.6,534.5 L1197,531.9 L1197,537.1 Z" fill="#2a2a2a"/>
<text x="1050.81" y="567.90" font-family="Liberation Mono" font-size="13.05" stroke="#222" stroke-width="0.22" fill="#222" textLength="79.08" lengthAdjust="spacingAndGlyphs" >Macro Text</text>
<path d="M1201.3,558.2 L1201.3,563.5 L1196,563.5" stroke="#2a2a2a" stroke-width="1.15" fill="none" stroke-linecap="round" stroke-linejoin="round" />
<path d="M1193.6,563.5 L1197,560.9 L1197,566.1 Z" fill="#2a2a2a"/>
<text x="1069.26" y="599.40" font-family="Liberation Sans" font-size="14.10" fill="#111" textLength="98.80" lengthAdjust="spacingAndGlyphs" stroke-width="0">Message Header</text>
<path d="M1201.3,589.2 L1201.3,594.5 L1196,594.5" stroke="#2a2a2a" stroke-width="1.15" fill="none" stroke-linecap="round" stroke-linejoin="round" />
<path d="M1193.6,594.5 L1197,591.9 L1197,597.1 Z" fill="#2a2a2a"/>
<text x="1051.68" y="628.30" font-family="Liberation Sans" font-size="10.76" stroke="#222" stroke-width="0.22" fill="#222" textLength="33.01" lengthAdjust="spacingAndGlyphs" >Normal</text>
<path d="M1201.3,619.2 L1201.3,624.5 L1196,624.5" stroke="#2a2a2a" stroke-width="1.15" fill="none" stroke-linecap="round" stroke-linejoin="round" />
<path d="M1193.6,624.5 L1197,621.9 L1197,627.1 Z" fill="#2a2a2a"/>
</g>
<rect x="1213.8" y="505.4" width="4.5" height="39.2" rx="2.25" fill="#d8d8d8" />
<line x1="1252" y1="150.6" x2="1263" y2="150.6" stroke="#666" stroke-width="1.1" />
<rect x="1245" y="164.4" width="24.75" height="26.6" rx="4" fill="#dcdcdc" />
<path d="M1253,182 L1262,173 C1263,172 1264.3,173.3 1263.3,174.3 L1254.3,183.3 L1252.5,183.8 Z M1251.3,184.8 L1264,184.8" stroke="#444" stroke-width="1" fill="none" stroke-linecap="round" stroke-linejoin="round" />
<path d="M1251.5,205.5 L1263.5,210.5 L1258.5,212 L1263.5,217 L1261.5,218.5 L1256.5,213.5 L1254.5,218 Z" stroke="#555" stroke-width="1.1" fill="none" stroke-linecap="round" stroke-linejoin="round" />
<path d="M1254,239.8 L1260.5,239.8 M1252,241.5 L1252,249.5 M1254,243 L1261,243 L1262.5,244.5 L1262.5,247 M1254,243 L1254,251 L1257,251" stroke="#555" stroke-width="1.1" fill="none" stroke-linecap="round" stroke-linejoin="round" />
<path d="M1259.5,248 L1263,251.3 M1263,248 L1259.5,251.3" stroke="#555" stroke-width="1" fill="none" stroke-linecap="round" stroke-linejoin="round" />
<rect x="1252.3" y="278.5" width="11" height="7.5" rx="1" fill="none" stroke="#555" stroke-width="1.1" />
<path d="M1254.5,278.5 L1254.5,276 C1254.5,271.5 1261,271.5 1261,276 L1261,278.5" stroke="#555" stroke-width="1.1" fill="none" stroke-linecap="round" stroke-linejoin="round" />
<path d="M1254.3,309 L1251.3,312.8 L1254.3,316.5 M1260.8,309 L1263.8,312.8 L1260.8,316.5 M1258.8,307.8 L1256.2,318" stroke="#555" stroke-width="1.1" fill="none" stroke-linecap="round" stroke-linejoin="round" />
<line x1="1251.3" y1="343.5" x2="1263.8" y2="343.5" stroke="#555" stroke-width="1" />
<line x1="1251.3" y1="349.5" x2="1263.8" y2="349.5" stroke="#555" stroke-width="1" />
<circle cx="1254.8" cy="343.3" r="1.8" fill="#eeeeee" stroke="#555" stroke-width="1.1"/><circle cx="1260.4" cy="349.5" r="1.8" fill="#eeeeee" stroke="#555" stroke-width="1.1"/>
<path d="M1251.6,377 C1253,373.5 1256,372.8 1257.5,372.8 C1261,372.8 1263.8,375.6 1263.8,379.5 C1263.8,383.4 1261,386.2 1257.3,386.2 C1253.6,386.2 1251,383.5 1251,379.5" stroke="#555" stroke-width="1.1" fill="none" stroke-linecap="round" stroke-linejoin="round" />
<path d="M1251.2,374.5 L1251.6,377.2 L1254.3,376.6" stroke="#555" stroke-width="1" fill="none" stroke-linecap="round" stroke-linejoin="round" />
<path d="M1257.3,376 L1257.3,379.8 L1260,382.3" stroke="#555" stroke-width="1.1" fill="none" stroke-linecap="round" stroke-linejoin="round" />
<path d="M1251.3,407.5 L1251.3,418.5 L1253.5,418.5 M1251.3,413 L1253.5,413" stroke="#555" stroke-width="0.9" fill="none" stroke-linecap="round" stroke-linejoin="round" />
<rect x="1253.8" y="411.2" width="10" height="3.4" rx="1" fill="none" stroke="#555" stroke-width="1" />
<rect x="1253.8" y="416.7" width="10" height="3.8" rx="1" fill="none" stroke="#555" stroke-width="1" />
<circle cx="1257.4" cy="447.5" r="6.3" fill="none" stroke="#555" stroke-width="1.1"/>
<path d="M1255.3,445.8 C1255.3,443 1259.6,443 1259.6,445.8 C1259.6,447.5 1257.4,447.5 1257.4,449.2" stroke="#555" stroke-width="1" fill="none" stroke-linecap="round" stroke-linejoin="round" />
<circle cx="1257.4" cy="451.2" r="0.6" fill="#555"/>
<circle cx="1252.8" cy="481.4" r="1.4" fill="none" stroke="#555" stroke-width="0.9"/>
<circle cx="1257.4" cy="481.4" r="1.4" fill="none" stroke="#555" stroke-width="0.9"/>
<circle cx="1262.2" cy="481.4" r="1.4" fill="none" stroke="#555" stroke-width="0.9"/>
<rect x="0" y="698" width="1280" height="22" rx="0" fill="#eeeeee" />
<line x1="0" y1="698.5" x2="1280" y2="698.5" stroke="#dcdcdc" stroke-width="1" />
<line x1="0" y1="718.5" x2="1280" y2="718.5" stroke="#e4e4e4" stroke-width="1" />
<rect x="0" y="719" width="1280" height="1" rx="0" fill="#f0f0f0" />
<text x="12.19" y="712.00" font-family="Liberation Sans" font-size="10.61" stroke="#333" stroke-width="0.22" fill="#333" textLength="38.02" lengthAdjust="spacingAndGlyphs" >Page: 1/1</text>
<line x1="60.5" y1="702" x2="60.5" y2="713" stroke="#d6d6d6" stroke-width="1" />
<text x="70.45" y="712.00" font-family="Liberation Sans" font-size="10.61" stroke="#333" stroke-width="0.22" fill="#333" textLength="37.30" lengthAdjust="spacingAndGlyphs" >Words: 0</text>
<line x1="117.7" y1="702" x2="117.7" y2="713" stroke="#d6d6d6" stroke-width="1" />
<text x="131.00" y="708.50" font-family="Liberation Sans" font-size="6.54" stroke="#444" stroke-width="0.22" fill="#444" textLength="12.72" lengthAdjust="spacingAndGlyphs" >ABC</text>
<path d="M135.5,711 L137.5,713.5 L141.5,709" stroke="#555" stroke-width="0.9" fill="none" stroke-linecap="round" stroke-linejoin="round" />
<text x="146.00" y="712.00" font-family="Liberation Sans" font-size="10.61" stroke="#333" stroke-width="0.22" fill="#333" textLength="47.41" lengthAdjust="spacingAndGlyphs" >Spell Check</text>
<path d="M201.6,706.3 L203.8,708.3 L201.6,710.3 Z" fill="#666"/>
<rect x="848.5" y="704.8" width="8" height="8.3" rx="1" fill="none" stroke="#555" stroke-width="1" />
<path d="M851.3,706.5 L851.3,710 L854,710" stroke="#555" stroke-width="0.9" fill="none" stroke-linecap="round" stroke-linejoin="round" />
<path d="M876,705 L882.7,705 L882.7,713 L876,713 L876,711 M876,707 L876,705 M873.8,709 L878.8,709 M877.3,707.5 L878.8,709 L877.3,710.5" stroke="#555" stroke-width="1" fill="none" stroke-linecap="round" stroke-linejoin="round" />
<line x1="894" y1="702" x2="894" y2="713" stroke="#d6d6d6" stroke-width="1" />
<rect x="901.2" y="698.8" width="18.4" height="18.5" rx="2" fill="#dddddd" />
<rect x="906" y="704.5" width="9" height="8.5" rx="1" fill="none" stroke="#555" stroke-width="1" />
<line x1="908" y1="707.3" x2="913" y2="707.3" stroke="#555" stroke-width="0.9" />
<line x1="908" y1="709.8" x2="911.5" y2="709.8" stroke="#555" stroke-width="0.9" />
<rect x="931.8" y="704.5" width="8.5" height="8.5" rx="1" fill="none" stroke="#555" stroke-width="1" />
<line x1="935" y1="704.5" x2="935" y2="713" stroke="#555" stroke-width="0.9" />
<line x1="936.5" y1="707" x2="938.5" y2="707" stroke="#555" stroke-width="0.8" />
<line x1="936.5" y1="709.5" x2="938.5" y2="709.5" stroke="#555" stroke-width="0.8" />
<path d="M958.3,704.3 L965,708.7 L958.3,713.2 Z" stroke="#555" stroke-width="1" fill="none" stroke-linecap="round" stroke-linejoin="round" />
<circle cx="987.3" cy="708.7" r="4.3" fill="none" stroke="#555" stroke-width="1.2"/>
<path d="M983,708.7 L991.6,708.7 M987.3,704.4 C985.3,706.5 985.3,710.9 987.3,713 C989.3,710.9 989.3,706.5 987.3,704.4" stroke="#555" stroke-width="0.9" fill="none" stroke-linecap="round" stroke-linejoin="round" />
<path d="M1008.8,708.7 C1011,704.8 1016,704.8 1018,708.7 C1016,712.6 1011,712.6 1008.8,708.7 Z M1009.5,706 C1011.5,703.8 1015.5,703.8 1017.5,706" stroke="#555" stroke-width="1" fill="none" stroke-linecap="round" stroke-linejoin="round" />
<circle cx="1013.4" cy="708.9" r="1.6" fill="none" stroke="#555" stroke-width="1"/>
<path d="M1023.40,707.70 L1025.20,709.70 L1027.01,707.70" fill="none" stroke="#444" stroke-width="1.25" stroke-linecap="round" stroke-linejoin="round"/>
<line x1="1039.5" y1="702" x2="1039.5" y2="713" stroke="#d6d6d6" stroke-width="1" />
<rect x="1051.2" y="704.2" width="7.8" height="7.8" rx="0" fill="none" stroke="#555" stroke-width="1" />
<path d="M1049.3,704 L1049.3,702.3 L1051,702.3 M1060.8,704 L1060.8,702.3 L1059,702.3 M1049.3,712.3 L1049.3,714 L1051,714 M1060.8,712.3 L1060.8,714 L1059,714" stroke="#555" stroke-width="1" fill="none" stroke-linecap="round" stroke-linejoin="round" />
<text x="1075.97" y="711.50" font-family="Liberation Sans" font-size="9.45" stroke="#4a5264" stroke-width="0.22" fill="#4a5264" textLength="21.51" lengthAdjust="spacingAndGlyphs" >150%</text>
<path d="M1105.99,707.30 L1107.70,709.30 L1109.41,707.30" fill="none" stroke="#555" stroke-width="1.25" stroke-linecap="round" stroke-linejoin="round"/>
<line x1="1124" y1="708" x2="1132.3" y2="708" stroke="#333" stroke-width="1.4" />
<circle cx="1186.2" cy="708.3" r="2.8" fill="#ffffff" stroke="#e2e2e2" stroke-width="0.8"/><circle cx="1186.2" cy="708.3" r="0.8" fill="#aaa"/>
<path d="M1236,704.4 L1236,712.3 M1232.2,708.3 L1239.8,708.3" stroke="#333" stroke-width="1.4" fill="none" stroke-linejoin="round" stroke-linecap="butt"/>
<path d="M1256.8,706.5 L1256.8,703.6 L1259.6,703.6 M1265.2,709.8 L1265.2,712.7 L1262.4,712.7 M1262.4,703.6 L1265.2,703.6 L1265.2,706.5 M1259.6,712.7 L1256.8,712.7 L1256.8,709.8 M1263,705.5 L1259,710.8" stroke="#555" stroke-width="1" fill="none" stroke-linecap="round" stroke-linejoin="round" />
</svg>
</body></html>
